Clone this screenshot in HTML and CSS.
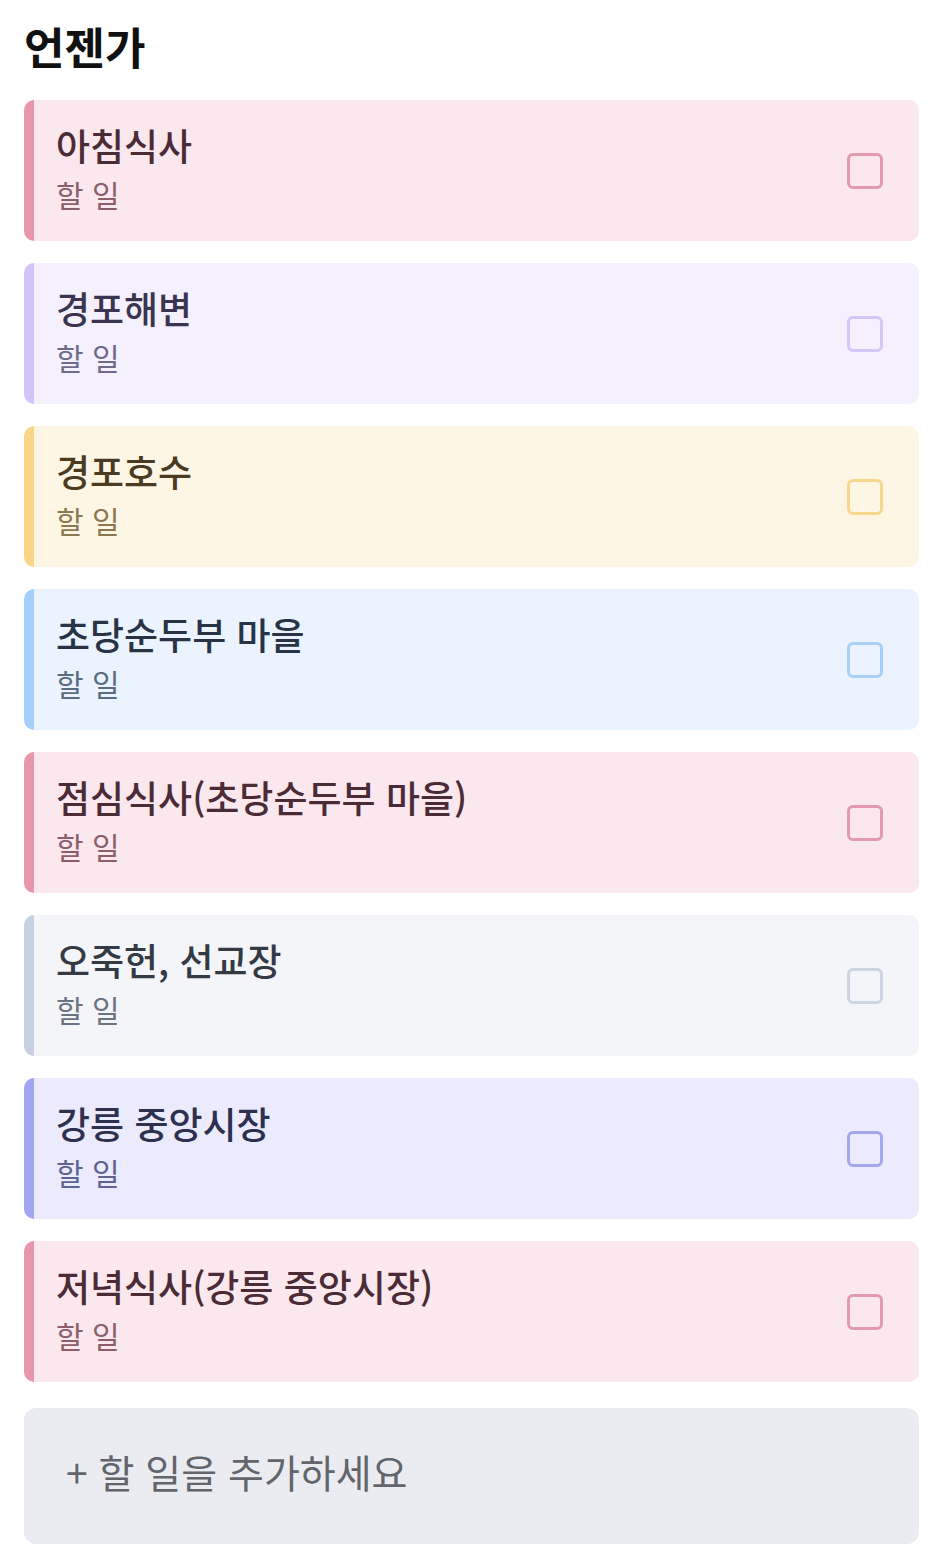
FILE: index.html
```html
<!DOCTYPE html>
<html lang="ko">
<head>
<meta charset="utf-8">
<link rel="stylesheet" href="styles.css">
</head>
<body>
<div class="page">
  <h1 class="heading">언젠가</h1>
  <div class="list">
    <div class="card pink"><div class="text"><div class="title">아침식사</div><div class="sub">할 일</div></div><div class="check"></div></div>
    <div class="card purple"><div class="text"><div class="title">경포해변</div><div class="sub">할 일</div></div><div class="check"></div></div>
    <div class="card yellow"><div class="text"><div class="title">경포호수</div><div class="sub">할 일</div></div><div class="check"></div></div>
    <div class="card blue"><div class="text"><div class="title">초당순두부 마을</div><div class="sub">할 일</div></div><div class="check"></div></div>
    <div class="card pink"><div class="text"><div class="title">점심식사(초당순두부 마을)</div><div class="sub">할 일</div></div><div class="check"></div></div>
    <div class="card gray"><div class="text"><div class="title">오죽헌, 선교장</div><div class="sub">할 일</div></div><div class="check"></div></div>
    <div class="card indigo"><div class="text"><div class="title">강릉 중앙시장</div><div class="sub">할 일</div></div><div class="check"></div></div>
    <div class="card pink"><div class="text"><div class="title">저녁식사(강릉 중앙시장)</div><div class="sub">할 일</div></div><div class="check"></div></div>
  </div>
  <div class="add">+ 할 일을 추가하세요</div>
</div>
</body>
</html>
```

FILE: styles.css
```css
html, body {
  margin: 0;
  padding: 0;
  background: #ffffff;
}
body {
  font-family: "Noto Sans CJK KR", "Noto Sans", sans-serif;
}
.page {
  padding: 18px 26px 0 24px;
}
.heading {
  margin: 0 0 26px 0;
  font-size: 44px;
  line-height: 56px;
  font-weight: 700;
  color: #111111;
}
.list {
  display: flex;
  flex-direction: column;
  gap: 22px;
}
.card {
  height: 141px;
  box-sizing: border-box;
  border-left: 10px solid;
  border-radius: 10px;
  display: flex;
  align-items: center;
  justify-content: space-between;
  padding: 0 36px 0 22px;
}
.text {
  display: flex;
  flex-direction: column;
  margin-bottom: 6px;
}
.title {
  font-size: 37px;
  line-height: 50px;
  font-weight: 500;
}
.sub {
  font-size: 30px;
  line-height: 42px;
  margin-top: 3px;
  font-weight: 400;
}
.check {
  width: 36px;
  height: 36px;
  box-sizing: border-box;
  border: 3px solid;
  border-radius: 6px;
}
.pink { background: #fbe8ef; border-left-color: #e996ac; }
.pink .title { color: #4b2b35; }
.pink .sub { color: #8c5d6b; }
.pink .check { border-color: #e49aae; }

.purple { background: #f4f0fe; border-left-color: #d2c3f8; }
.purple .title { color: #3a3450; }
.purple .sub { color: #6f6a88; }
.purple .check { border-color: #d4c6f6; }

.yellow { background: #fef6e5; border-left-color: #fad588; }
.yellow .title { color: #4a3b22; }
.yellow .sub { color: #8c7751; }
.yellow .check { border-color: #f7d78c; }

.blue { background: #ebf4fe; border-left-color: #a4cffa; }
.blue .title { color: #283445; }
.blue .sub { color: #5a6c80; }
.blue .check { border-color: #a8cff5; }

.gray { background: #f4f5f9; border-left-color: #c8d1e2; }
.gray .title { color: #343a44; }
.gray .sub { color: #6b7280; }
.gray .check { border-color: #cdd4e2; }

.indigo { background: #ebebfd; border-left-color: #a0a6f4; }
.indigo .title { color: #2e3050; }
.indigo .sub { color: #5f6390; }
.indigo .check { border-color: #a3a8ec; }

.add {
  margin-top: 26px;
  height: 136px;
  box-sizing: border-box;
  background: #ebecf1;
  border-radius: 12px;
  display: flex;
  align-items: center;
  padding: 0 0 10px 42px;
  font-size: 39px;
  color: #62656b;
}
```
